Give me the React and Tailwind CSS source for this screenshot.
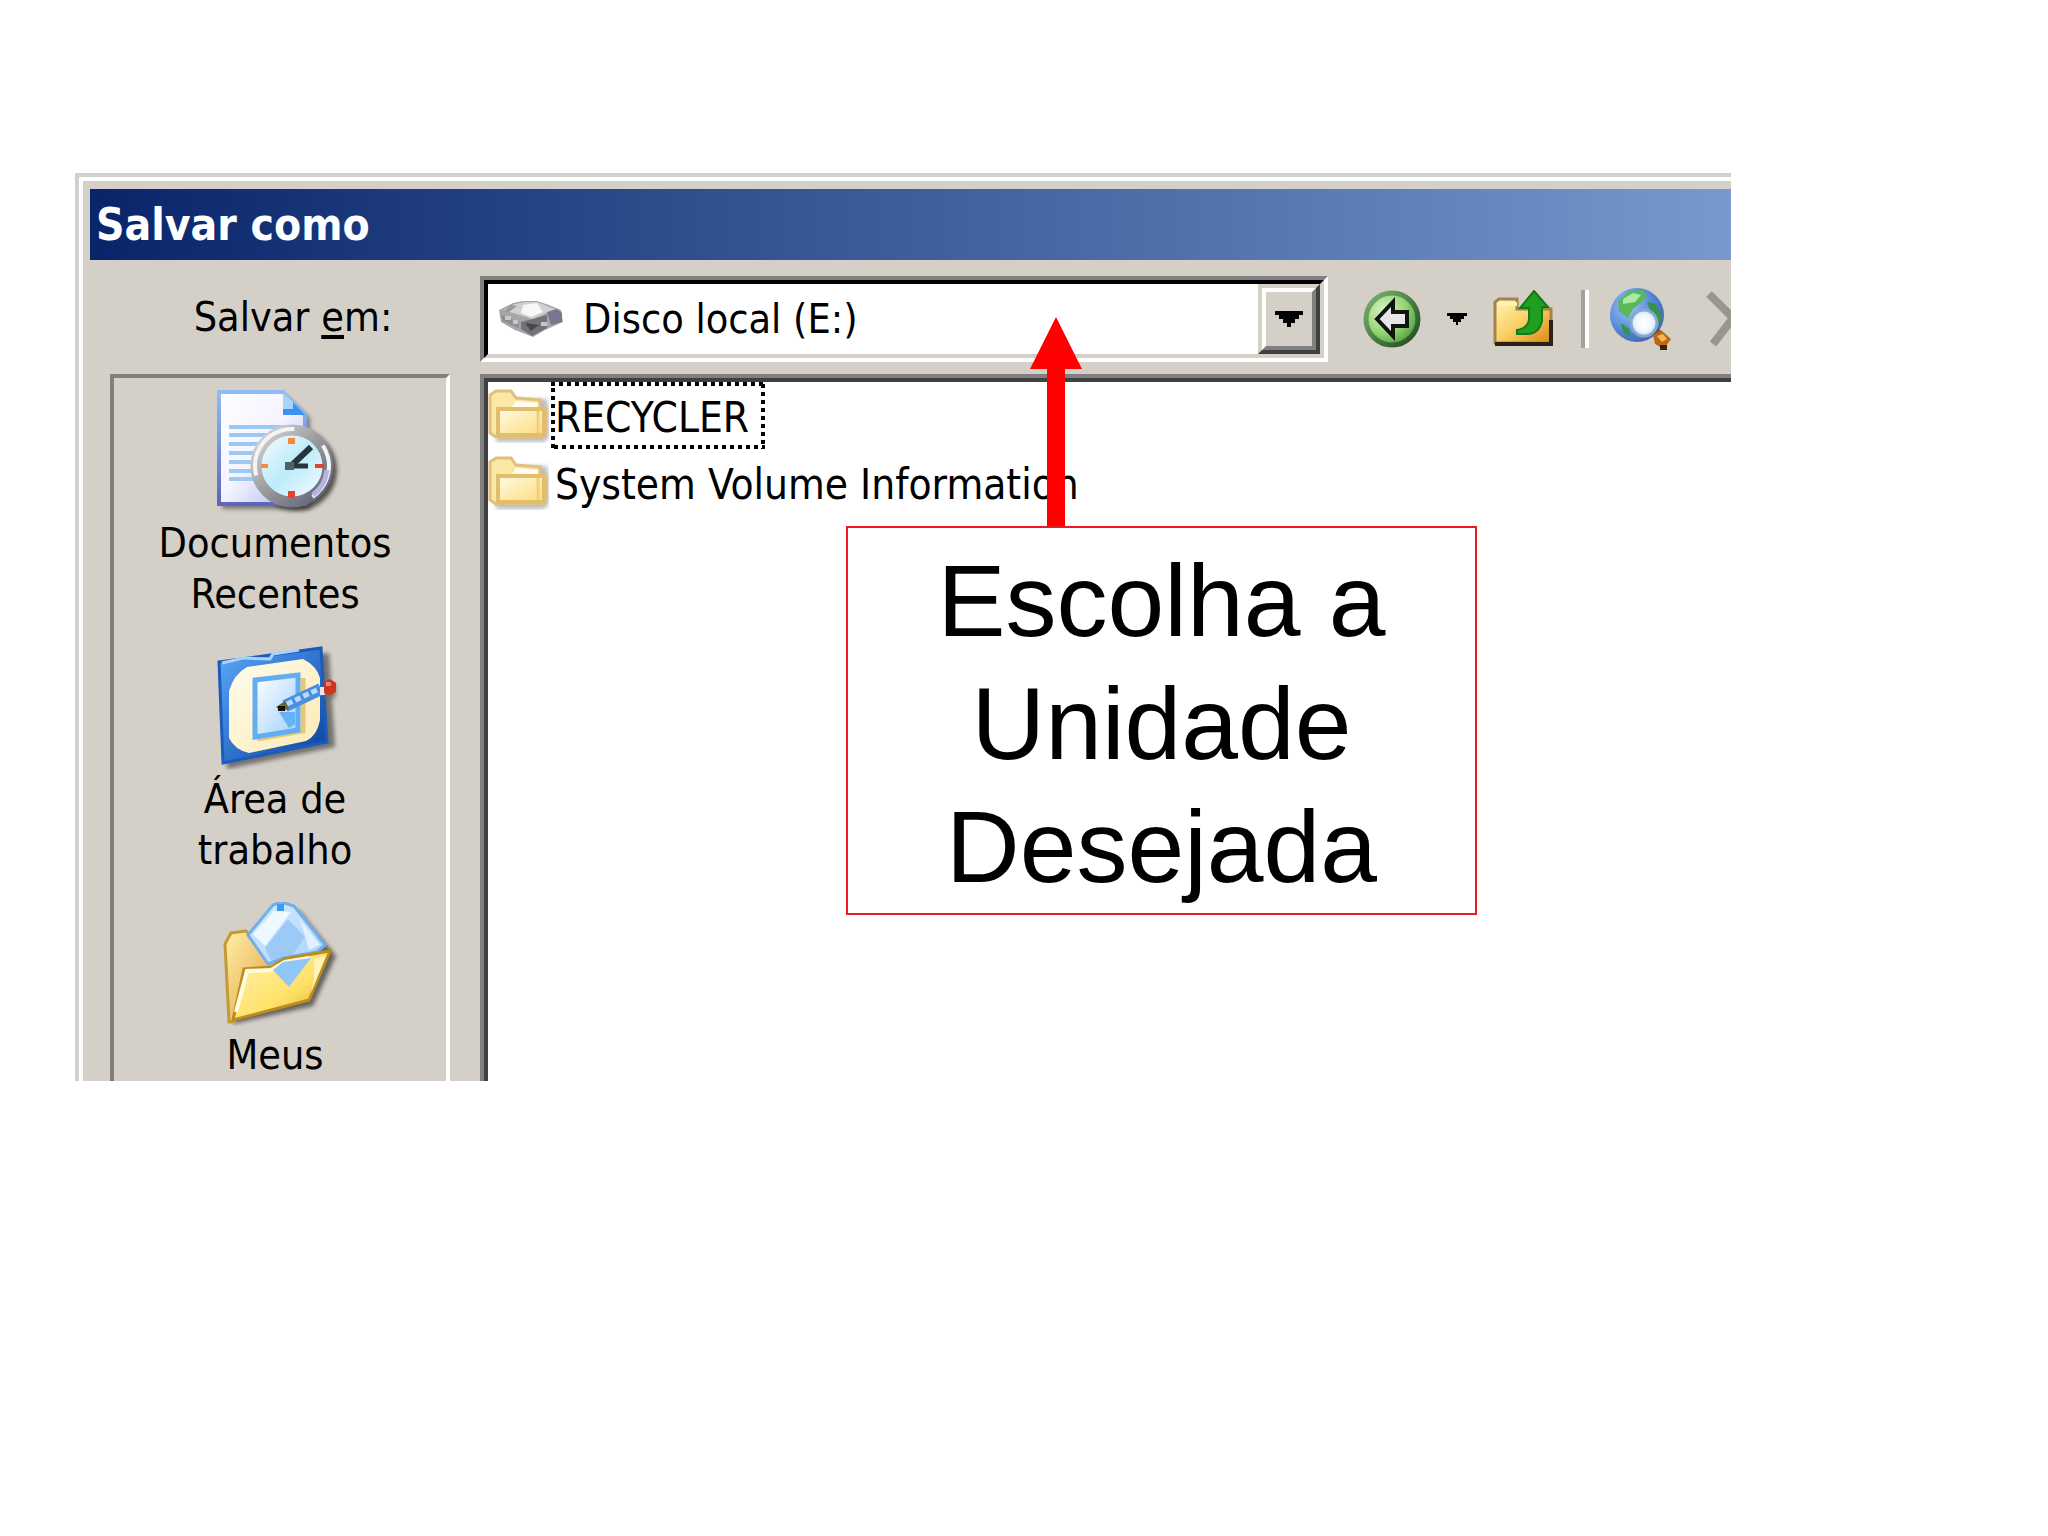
import { useState } from 'react';

const places = [
  { id: 'recent', label: 'Documentos Recentes', Icon: RecentIcon },
  { id: 'desktop', label: 'Área de trabalho', Icon: DesktopIcon },
  { id: 'documents', label: 'Meus', Icon: DocumentsIcon },
];

const folders = ['RECYCLER', 'System Volume Information'];

function RecentIcon() {
  return (
    <svg className="ml-2 h-[124px] w-[124px]" viewBox="0 0 124 124" aria-hidden="true">
      <defs>
        <linearGradient id="page" x1="0" y1="0" x2="1" y2="1">
          <stop offset="0" stopColor="#ffffff" />
          <stop offset="0.5" stopColor="#f3f4ff" />
          <stop offset="1" stopColor="#a9aeea" />
        </linearGradient>
        <linearGradient id="pageEdge" x1="0" y1="0" x2="0" y2="1">
          <stop offset="0" stopColor="#8fbcf5" />
          <stop offset="1" stopColor="#5d66bd" />
        </linearGradient>
        <linearGradient id="face" x1="0" y1="0" x2="1" y2="1">
          <stop offset="0" stopColor="#ffffff" />
          <stop offset="0.5" stopColor="#bdebfa" />
          <stop offset="1" stopColor="#ffffff" />
        </linearGradient>
        <linearGradient id="rim" x1="0" y1="0" x2="1" y2="1">
          <stop offset="0" stopColor="#dcdcde" />
          <stop offset="0.5" stopColor="#98989c" />
          <stop offset="1" stopColor="#5c5c74" />
        </linearGradient>
        <filter id="soft" x="-20%" y="-20%" width="140%" height="140%">
          <feGaussianBlur stdDeviation="2" />
        </filter>
      </defs>
      <path d="M5 6H70L93 28V119H5Z" fill="#55534f" opacity="0.7" filter="url(#soft)" />
      <circle cx="79" cy="80" r="41" fill="#33312f" opacity="0.8" filter="url(#soft)" />
      <path d="M2 2H66L88 25V114H2Z" fill="url(#page)" stroke="url(#pageEdge)" strokeWidth="4" />
      <path d="M66 2L88 25H66Z" fill="#3a93ee" />
      <path d="M66 2L76 12V19H66Z" fill="#a8d3fa" />
      <path d="M12 37H80M12 45H60M12 54H50M12 63H44M12 72H42M12 81H42M12 89H42" stroke="#9cc9f3" strokeWidth="4" />
      <circle cx="75" cy="76" r="36" fill="url(#face)" stroke="url(#rim)" strokeWidth="11" />
      <circle cx="75" cy="76" r="37" fill="none" stroke="#f4f4f6" strokeWidth="4" strokeDasharray="70 34 58 200" transform="rotate(165 75 76)" />
      <path d="M96 105A36 36 0 0 0 110 80" fill="none" stroke="#b6b4e4" strokeWidth="5" />
      <path d="M71 48h7v6h-7zM44 74h7v4h-7z" fill="#f58a3c" />
      <path d="M71 101h7v7h-7zM98 74h9v4h-9z" fill="#e8432a" />
      <path d="M74 76L94 57" stroke="#26363d" strokeWidth="6" />
      <path d="M72 76H91" stroke="#26363d" strokeWidth="5" />
      <rect x="68" y="72" width="9" height="8" fill="#4d5f68" />
    </svg>
  );
}

function DesktopIcon() {
  return (
    <svg className="ml-2 h-[124px] w-[124px]" viewBox="0 0 124 124" aria-hidden="true">
      <defs>
        <linearGradient id="pad" x1="0" y1="0" x2="1" y2="1">
          <stop offset="0" stopColor="#5fa9f3" />
          <stop offset="0.35" stopColor="#3d83dd" />
          <stop offset="1" stopColor="#093f9e" />
        </linearGradient>
        <linearGradient id="cream" x1="0" y1="0" x2="1" y2="1">
          <stop offset="0" stopColor="#fffdf0" />
          <stop offset="1" stopColor="#fbe9b0" />
        </linearGradient>
        <linearGradient id="sheet" x1="0" y1="0" x2="1" y2="1">
          <stop offset="0" stopColor="#ffffff" />
          <stop offset="1" stopColor="#9fd0fb" />
        </linearGradient>
      </defs>
      <path d="M6 20L112 7L118 101L10 123Z" fill="#4c4a48" opacity="0.7" filter="url(#soft)" />
      <path d="M2 16L104 2L110 96L6 117Z" fill="url(#pad)" stroke="#1b5cba" strokeWidth="3" />
      <path d="M5 17L27 12L53 13L56 8L82 4" fill="none" stroke="#a9d3fb" strokeWidth="3" />
      <path d="M30 21L86 13Q100 20 103 32V74Q100 90 89 95L32 107Q18 104 12 92V45Q17 28 30 21Z" fill="url(#cream)" />
      <path d="M40 93L86 85V32" fill="none" stroke="#e3c877" strokeWidth="5" />
      <path d="M38 34L81 29V84L38 91Z" fill="url(#sheet)" stroke="#62aef3" strokeWidth="5" />
      <path d="M62 66H78V78L72 82Z" fill="#66b3f6" />
      <path d="M68 60L104 43" stroke="#4b8edb" strokeWidth="12" />
      <path d="M70 58L102 43" stroke="#b5dafb" strokeWidth="5" strokeDasharray="6 3" />
      <path d="M59 61L68 55L72 63L64 65Z" fill="#6d6636" />
      <path d="M61 60h7v5h-7z" fill="#16140c" />
      <path d="M108 38H119V52H108Z" fill="#6b6862" opacity="0.7" filter="url(#soft)" />
      <path d="M103 41h5v8h-5z" fill="#e9e4e6" />
      <path d="M107 36L113 33L119 37V46L114 49L107 47Z" fill="#cf3420" />
      <path d="M109 36h5v4h-5z" fill="#f0836c" />
    </svg>
  );
}

function DocumentsIcon() {
  return (
    <svg className="ml-2 h-[124px] w-[124px]" viewBox="0 12 124 124" aria-hidden="true">
      <defs>
        <linearGradient id="folderBack" x1="0" y1="0" x2="1" y2="1">
          <stop offset="0" stopColor="#fff0a8" />
          <stop offset="1" stopColor="#dc9a33" />
        </linearGradient>
        <linearGradient id="folderFront" x1="0" y1="0" x2="1" y2="1">
          <stop offset="0" stopColor="#fff6b4" />
          <stop offset="0.6" stopColor="#ffe168" />
          <stop offset="1" stopColor="#d9a72b" />
        </linearGradient>
        <linearGradient id="leaf" x1="0" y1="0" x2="1" y2="1">
          <stop offset="0" stopColor="#d6edff" />
          <stop offset="1" stopColor="#a9d2fb" />
        </linearGradient>
      </defs>
      <path d="M16 134L96 116L119 66L82 20L58 30Z" fill="#3f3d3a" opacity="0.75" filter="url(#soft)" />
      <path d="M8 54L14 43L29 41L62 74L16 132H12Z" fill="url(#folderBack)" stroke="#c49a36" strokeWidth="3" />
      <path d="M31 45L56 15L64 12L77 16L108 55L100 62L66 68L51 74Z" fill="url(#leaf)" stroke="#74aeea" strokeWidth="3" />
      <path d="M36 44L57 21L74 22L48 56Z" fill="#eef8ff" />
      <path d="M71 29L88 47L76 64L54 70L48 58Z" fill="#9cc9f6" />
      <path d="M60 14h7v7h-7z" fill="#3e9cf0" />
      <path d="M82 28L103 55L92 60L88 46Z" fill="#e3f1ff" />
      <path d="M16 130L27 79L54 77L67 69L113 61L92 110Z" fill="url(#folderFront)" stroke="#bc8d1d" strokeWidth="3" />
      <path d="M19 122L30 81L54 80L68 72L92 68" fill="none" stroke="#fffbe0" strokeWidth="4" />
      <path d="M56 80L66 72L94 68L72 97Z" fill="#8fc6f5" />
      <path d="M94 103L109 66L97 69V90Z" fill="#fff4b8" />
    </svg>
  );
}

function FolderIcon() {
  return (
    <svg className="h-[54px] w-[61px] shrink-0" viewBox="0 0 61 54" aria-hidden="true">
      <defs>
        <linearGradient id="smallFolder" x1="0" y1="0" x2="1" y2="1">
          <stop offset="0" stopColor="#fffbe2" />
          <stop offset="1" stopColor="#fbdc7e" />
        </linearGradient>
      </defs>
      <path d="M10 10H59L61 22V48L56 53H8Z" fill="#8b9098" opacity="0.6" filter="url(#soft)" />
      <path d="M2 44V6L8 2H23L28 9L52 11V20H58V42L55 48H8Z" fill="#fbe7a6" stroke="#dfc07c" strokeWidth="3" />
      <path d="M28 12L50 14V18H24Z" fill="#fffdf2" />
      <path d="M10 20H56V46H10Z" fill="url(#smallFolder)" stroke="#e2bd6c" strokeWidth="4" />
      <path d="M50 22V44" stroke="#f0cf84" strokeWidth="3" />
    </svg>
  );
}

function DiskIcon() {
  return (
    <svg className="h-[38px] w-[64px] shrink-0" viewBox="0 0 64 38" aria-hidden="true">
      <path d="M0 10L14 3L24 1H38L50 5L62 10L64 22L46 30L34 37L16 30L2 22Z" fill="#a6a6aa" />
      <path d="M4 10L16 4L26 2H38L56 9L34 19Z" fill="#d0d0d3" />
      <path d="M24 5L38 3L44 12L32 17L22 13Z" fill="#f8f8f8" />
      <path d="M4 12L12 5L18 6L10 12Z" fill="#9b9b9b" />
      <path d="M30 20L48 15V28L33 36L22 29V22Z" fill="#737377" />
      <path d="M48 12L58 9L63 13V22L52 25Z" fill="#77788f" />
      <path d="M2 15L20 22V28L4 21Z" fill="#8c8c92" />
      <path d="M26 23L40 25L32 31Z" fill="#48484c" />
      <path d="M6 16h6v4H6zM14 20h5v4h-5zM42 22h6v4h-6z" fill="#c7c7cb" />
    </svg>
  );
}

function BackIcon() {
  return (
    <svg className="h-[58px] w-[58px]" viewBox="0 0 58 58" aria-hidden="true">
      <defs>
        <radialGradient id="green" cx="0.35" cy="0.35" r="0.7">
          <stop offset="0" stopColor="#dcf5c8" />
          <stop offset="0.6" stopColor="#93d573" />
          <stop offset="1" stopColor="#4f9c42" />
        </radialGradient>
        <linearGradient id="ring" x1="0" y1="0" x2="1" y2="1">
          <stop offset="0" stopColor="#7fb46e" />
          <stop offset="1" stopColor="#1d4a1e" />
        </linearGradient>
      </defs>
      <circle cx="29" cy="29" r="26" fill="url(#green)" stroke="url(#ring)" strokeWidth="5" />
      <path d="M14 29L30 12V22H44V36H30V46Z" fill="#e6e6ea" stroke="#10140f" strokeWidth="4" />
    </svg>
  );
}

function UpIcon() {
  return (
    <svg className="h-[58px] w-[60px]" viewBox="0 0 60 58" aria-hidden="true">
      <defs>
        <linearGradient id="upFolder" x1="0" y1="0" x2="1" y2="1">
          <stop offset="0" stopColor="#fff6b8" />
          <stop offset="0.5" stopColor="#fbcf66" />
          <stop offset="1" stopColor="#d98712" />
        </linearGradient>
      </defs>
      <path d="M2 53V12L6 9H24V19H58V53Z" fill="url(#upFolder)" stroke="#a3834a" strokeWidth="3" />
      <path d="M5 14H24" stroke="#fff3ae" strokeWidth="4" />
      <path d="M2 54H58V30" fill="none" stroke="#2c2213" strokeWidth="4" />
      <path d="M41 1L55 17H49V31Q46 44 34 44H24V40Q36 38 36 28V18H27Z" fill="#1f9e20" stroke="#147a18" strokeWidth="2" />
    </svg>
  );
}

function GlobeIcon() {
  return (
    <svg className="h-[64px] w-[64px]" viewBox="0 0 64 64" aria-hidden="true">
      <defs>
        <radialGradient id="sea" cx="0.35" cy="0.35" r="0.7">
          <stop offset="0" stopColor="#9cc4f5" />
          <stop offset="0.7" stopColor="#4f83d6" />
          <stop offset="1" stopColor="#4568ad" />
        </radialGradient>
        <radialGradient id="lens">
          <stop offset="0" stopColor="#ffffff" />
          <stop offset="0.6" stopColor="#f1f9fd" />
          <stop offset="1" stopColor="#c3e2f5" />
        </radialGradient>
      </defs>
      <circle cx="28" cy="28" r="27" fill="url(#sea)" />
      <path d="M9 14L20 4L34 3L38 9L30 17L24 22L19 31L10 24Z" fill="#58b85a" />
      <path d="M14 12L24 6L32 8L26 15L14 17Z" fill="#aee8a0" />
      <path d="M38 15L46 16L53 28L51 38L44 32Z" fill="#37924b" />
      <path d="M12 36L20 42L22 50L14 45Z" fill="#37924b" />
      <path d="M46 44L57 55" stroke="#56504a" strokeWidth="8" />
      <circle cx="35" cy="36" r="13" fill="url(#lens)" stroke="#86a8cf" strokeWidth="3" />
      <path d="M44 48L52 43L62 52L55 62L46 57Z" fill="#b96a16" />
      <path d="M48 49L54 47L58 52L53 55Z" fill="#f7b55a" />
      <path d="M51 58h7v5h-7z" fill="#35270f" />
    </svg>
  );
}

// stepped triangle, the way the classic theme draws it
function DropArrow({ className }) {
  return (
    <svg className={className} viewBox="0 0 7 4" shapeRendering="crispEdges" aria-hidden="true">
      <path d="M0 0H7V1H6V2H5V3H4V4H3V3H2V2H1V1H0Z" fill="#000" />
    </svg>
  );
}

function Callout() {
  return (
    <div className="absolute left-[771px] top-[144px] w-[631px]">
      <svg className="ml-[184px] block h-[209px] w-[52px]" viewBox="0 0 52 209" aria-hidden="true">
        <path d="M26 0L52 52H35V209H17V52H0Z" fill="#ff0000" />
      </svg>
      <p className="border-2 border-[#e81c24] bg-white px-20 pb-1 pt-3 text-center font-['Liberation_Sans',Arial,sans-serif] text-[102px] leading-[123px]">
        Escolha a Unidade Desejada
      </p>
    </div>
  );
}

export default function App() {
  const [selected, setSelected] = useState('RECYCLER');

  return (
    <main className="min-h-screen bg-white pl-[75px] pr-[317px] pt-[173px] font-['DejaVu_Sans_Condensed','DejaVu_Sans',sans-serif] text-[41px] leading-[51px] text-black">
      <div className="relative">
        <section className="overflow-hidden border-l-4 border-t-4 border-[#d0d0cc] bg-[#d4d0c8]">
          <div className="border-l-4 border-t-4 border-white pl-[7px] pt-2">
            <h1 className="flex h-[71px] items-center bg-linear-to-r from-[#0a246a] to-[#7799cd] pl-1.5 text-[44px] font-bold text-white">
              Salvar como
            </h1>

            <div className="flex h-[114px] items-center pt-1">
              <label htmlFor="drive" className="w-[390px] shrink-0 pb-1 pl-4 text-center">
                Salvar <u className="decoration-4 underline-offset-4">e</u>m:
              </label>
              <div className="w-[848px] shrink-0 border-4 border-b-white border-l-[#808080] border-r-white border-t-[#808080]">
                <div className="flex h-[78px] items-center border-4 border-b-[#d4d0c8] border-l-black border-r-[#d4d0c8] border-t-black bg-white pl-[11px]">
                  <DiskIcon />
                  <select id="drive" className="h-full min-w-0 flex-1 appearance-none bg-white pl-5 outline-none">
                    <option>Disco local (E:)</option>
                  </select>
                  <span className="pointer-events-none h-full w-[62px] border-4 border-b-[#404040] border-l-[#d4d0c8] border-r-[#404040] border-t-[#d4d0c8]">
                    <span className="flex h-full items-center justify-center border-4 border-b-[#808080] border-l-white border-r-[#808080] border-t-white bg-[#d4d0c8]">
                      <DropArrow className="h-4 w-7" />
                    </span>
                  </span>
                </div>
              </div>
              <div className="flex items-center pl-[35px]">
                <button aria-label="Voltar"><BackIcon /></button>
                <button aria-label="Histórico" className="px-[26px]"><DropArrow className="h-3 w-5" /></button>
                <button aria-label="Um nível acima"><UpIcon /></button>
                <span className="ml-7 mr-5 h-[58px] w-2 border-l-4 border-r-4 border-l-[#a5a19a] border-r-white" />
                <button aria-label="Pesquisar na Web"><GlobeIcon /></button>
                <button aria-label="Excluir" className="ml-8 shrink-0">
                  <svg className="h-[58px] w-[58px]" viewBox="0 0 58 58" aria-hidden="true">
                    <path d="M4 4L28 28L8 54M28 28L50 4M28 28L52 52" fill="none" stroke="#99968f" strokeWidth="8" />
                  </svg>
                </button>
              </div>
            </div>

            <div className="flex">
              <nav className="ml-5 mr-[30px] w-[340px] shrink-0 border-l-4 border-r-4 border-t-4 border-l-[#848078] border-r-white border-t-[#848078] pr-2.5 pt-3">
                {places.map(({ id, label, Icon }) => (
                  <button key={id} className="mb-[26px] flex w-full flex-col items-center gap-1 last:mb-0">
                    <Icon />
                    <span className="w-[250px] text-center">{label}</span>
                  </button>
                ))}
              </nav>

              <div className="flex-1 border-l-4 border-t-4 border-[#808080]">
                <ul className="h-full border-l-4 border-t-4 border-[#404040] bg-white text-[42px]">
                  {folders.map((name) => (
                    <li key={name}>
                      <button onClick={() => setSelected(name)} className="flex h-[67px] items-center gap-0.5">
                        <FolderIcon />
                        <span className="relative flex h-full items-center whitespace-nowrap pl-1 pr-4 pt-1">
                          {name}
                          {name === selected && (
                            <svg className="absolute inset-0 h-full w-full" shapeRendering="crispEdges" aria-hidden="true">
                              <rect width="100%" height="100%" fill="none" stroke="#000" strokeWidth="8" strokeDasharray="4 4" />
                            </svg>
                          )}
                        </span>
                      </button>
                    </li>
                  ))}
                </ul>
              </div>
            </div>
          </div>
        </section>
        <Callout />
      </div>
    </main>
  );
}
